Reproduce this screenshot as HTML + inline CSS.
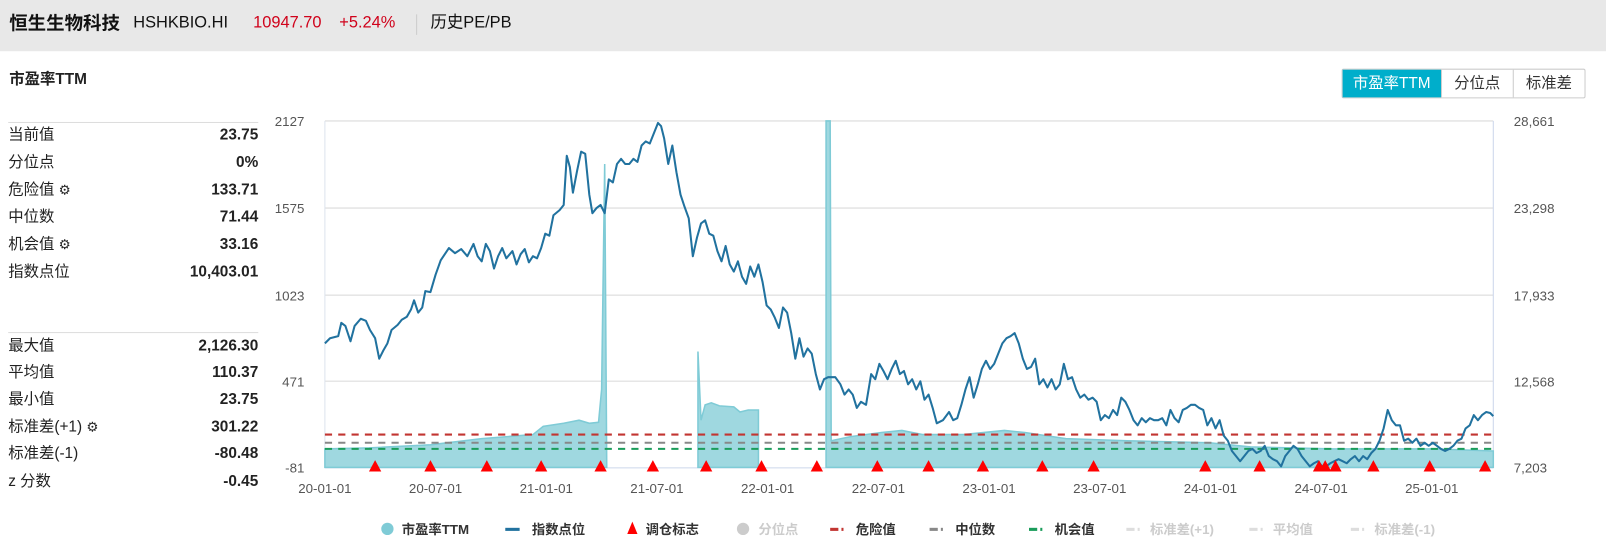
<!DOCTYPE html>
<html><head><meta charset="utf-8">
<style>
html,body{margin:0;padding:0;width:1606px;height:553px;overflow:hidden;background:#fff;font-family:"Liberation Sans","Noto Sans CJK SC",sans-serif;}
#w{position:absolute;left:0;top:0;width:1567px;height:540px;transform:scale(1.0249);transform-origin:0 0;}
.hdr{position:absolute;left:0;top:0;width:1567px;height:50px;background:#e8e8e8;}
.t{position:absolute;white-space:nowrap;line-height:20px;}
.row{position:absolute;left:8px;width:244px;font-size:15px;color:#222;display:flex;justify-content:space-between;align-items:center;height:20px;line-height:20px;}
.row b{font-weight:bold;font-family:"Liberation Sans",sans-serif;}
.btns{position:absolute;left:1309px;top:67px;height:27px;display:flex;border:1px solid #ccc;border-radius:2px;font-size:15px;}
.btns div{padding:0 12px;line-height:27px;border-left:1px solid #ccc;color:#333;}
.btns div.on{background:#00aecb;color:#fff;border-left:none;padding:0 10px;}
</style></head><body><div id="w">
<div class="hdr"></div>
<div class="t" style="left:9px;top:13px;font-size:18px;font-weight:bold;color:#111">恒生生物科技</div>
<div class="t" style="left:130px;top:13px;font-size:16px;color:#111">HSHKBIO.HI</div>
<div class="t" style="left:247px;top:13px;font-size:16px;color:#d0021b">10947.70</div>
<div class="t" style="left:331px;top:13px;font-size:16px;color:#d0021b">+5.24%</div>
<div style="position:absolute;left:406px;top:14px;width:1px;height:20px;background:#ccc"></div>
<div class="t" style="left:420px;top:13px;font-size:16px;color:#111">历史PE/PB</div>
<div class="t" style="left:9px;top:68px;font-size:15px;font-weight:bold;color:#222">市盈率TTM</div>
<div class="btns"><div class="on">市盈率TTM</div><div>分位点</div><div>标准差</div></div>

<div style="position:absolute;left:8px;top:119px;width:244px;height:1px;background:#ddd"></div>
<div style="position:absolute;left:8px;top:324px;width:244px;height:1px;background:#ddd"></div>
<div class="row" style="top:122px"><span>当前值</span><b>23.75</b></div>
<div class="row" style="top:149px"><span>分位点</span><b>0%</b></div>
<div class="row" style="top:176px"><span>危险值 <span style="font-size:13px">⚙</span></span><b>133.71</b></div>
<div class="row" style="top:202px"><span>中位数</span><b>71.44</b></div>
<div class="row" style="top:229px"><span>机会值 <span style="font-size:13px">⚙</span></span><b>33.16</b></div>
<div class="row" style="top:256px"><span>指数点位</span><b>10,403.01</b></div>
<div class="row" style="top:328px"><span>最大值</span><b>2,126.30</b></div>
<div class="row" style="top:354px"><span>平均值</span><b>110.37</b></div>
<div class="row" style="top:380px"><span>最小值</span><b>23.75</b></div>
<div class="row" style="top:407px"><span>标准差(+1) <span style="font-size:13px">⚙</span></span><b>301.22</b></div>
<div class="row" style="top:433px"><span>标准差(-1)</span><b>-80.48</b></div>
<div class="row" style="top:460px"><span>z 分数</span><b>-0.45</b></div>

<svg style="position:absolute;left:0;top:0" width="1567" height="540" font-family="Liberation Sans, sans-serif">
<g stroke="#e6e6e6" stroke-width="1.5">
<line x1="317" y1="118" x2="1457" y2="118"/><line x1="317" y1="203" x2="1457" y2="203"/>
<line x1="317" y1="288" x2="1457" y2="288"/><line x1="317" y1="372" x2="1457" y2="372"/>
</g>
<line x1="317" y1="118" x2="317" y2="456" stroke="#dde4ee"/>
<line x1="1457" y1="118" x2="1457" y2="456" stroke="#ccd6eb"/>
<line x1="317" y1="456.5" x2="1457" y2="456.5" stroke="#ccd6eb"/>
<g fill="#555" font-size="13" text-anchor="end">
<text x="297" y="123">2127</text><text x="297" y="208">1575</text><text x="297" y="293">1023</text><text x="297" y="377">471</text><text x="297" y="461">-81</text>
</g>
<g fill="#555" font-size="13">
<text x="1477" y="123">28,661</text><text x="1477" y="208">23,298</text><text x="1477" y="293">17,933</text><text x="1477" y="377">12,568</text><text x="1477" y="461">7,203</text>
</g>
<g fill="#555" font-size="13" text-anchor="middle">
<text x="317" y="481">20-01-01</text><text x="425" y="481">20-07-01</text><text x="533" y="481">21-01-01</text><text x="641" y="481">21-07-01</text><text x="749" y="481">22-01-01</text><text x="857" y="481">22-07-01</text><text x="965" y="481">23-01-01</text><text x="1073" y="481">23-07-01</text><text x="1181" y="481">24-01-01</text><text x="1289" y="481">24-07-01</text><text x="1397" y="481">25-01-01</text>
</g>
<g fill="#9fd8e0" stroke="#7fcbd6" stroke-width="1.5">
<polygon points="317,456 317,438 360,437 420,434 470,428 520,424 530,416 550,413 565,410 575,413 584,412 587,380 590,160 592,456"/>
<polygon points="681,456 681,343 684,410 688,395 694,393 702,396 716,397 722,402 730,400 740,400 740,456"/>
<polygon points="806,456 806,118 810,118 811,430 830,426 860,422 880,420 900,424 940,424 980,420 1000,422 1040,428 1100,430 1180,432 1220,436 1300,438 1400,438 1457,440 1457,456"/>
</g>
<g stroke-width="2" stroke-dasharray="7,6">
<line x1="317" y1="424" x2="1457" y2="424" stroke="#c23531"/>
<line x1="317" y1="432" x2="1457" y2="432" stroke="#888"/>
<line x1="317" y1="438" x2="1457" y2="438" stroke="#1a9c5a"/>
</g>
<polyline fill="none" stroke="#21729f" stroke-width="2" stroke-linejoin="round" points="317,335 322,330 330,328 333,315 337,318 342,333 346,318 352,311 357,313 361,322 366,330 370,350 374,342 378,335 382,322 388,317 392,312 397,309 401,302 404,293 408,305 412,300 415,284 420,285 425,268 430,254 438,242 444,247 450,243 456,250 462,238 466,250 470,255 474,238 478,245 482,262 486,250 490,242 494,252 500,245 504,258 508,248 512,243 516,256 520,250 524,252 528,242 532,228 536,230 540,210 546,205 550,200 553,152 556,163 559,188 563,167 567,148 571,150 575,190 578,208 582,203 586,200 590,208 594,175 598,178 602,160 606,155 610,160 614,160 618,155 622,158 626,142 630,138 634,140 638,130 642,120 645,123 648,135 652,160 656,142 660,168 664,190 668,202 672,213 676,250 680,232 684,218 688,215 692,228 696,230 700,245 704,255 708,240 712,258 716,265 720,255 724,270 728,277 732,260 736,270 740,258 744,275 748,298 752,302 756,310 760,320 764,300 768,305 772,325 776,350 780,330 784,348 788,340 792,345 796,365 800,380 804,370 808,368 815,368 820,375 824,385 828,380 832,385 836,398 840,392 845,395 850,365 854,370 858,355 862,362 866,370 870,360 874,352 878,365 882,362 886,375 890,370 894,380 898,372 902,390 906,385 910,398 914,413 920,410 926,402 930,410 934,408 938,395 942,380 946,368 950,388 954,375 958,360 962,352 966,360 970,355 974,345 978,335 982,330 986,328 990,325 994,335 998,350 1002,360 1006,358 1010,350 1014,375 1018,370 1022,378 1026,370 1030,380 1034,375 1038,355 1042,370 1046,368 1050,380 1054,388 1058,385 1062,390 1066,388 1070,392 1074,410 1078,405 1082,408 1086,400 1090,405 1094,388 1098,392 1102,400 1106,410 1110,415 1114,408 1118,412 1122,408 1126,410 1130,410 1134,408 1138,415 1142,400 1146,408 1150,412 1154,400 1158,398 1162,395 1166,395 1170,398 1174,400 1178,415 1182,408 1186,418 1190,410 1194,425 1198,430 1202,440 1206,445 1210,450 1214,445 1218,440 1222,438 1226,442 1230,440 1234,435 1238,445 1242,448 1246,450 1250,455 1254,445 1258,440 1262,435 1266,438 1270,445 1274,450 1278,455 1282,452 1286,450 1290,455 1294,455 1298,452 1302,450 1306,448 1310,450 1314,452 1318,448 1322,445 1326,450 1330,445 1334,448 1338,442 1342,438 1346,430 1350,418 1354,400 1358,410 1362,415 1366,415 1370,430 1374,428 1378,432 1382,428 1386,435 1390,432 1394,435 1398,432 1402,435 1406,438 1410,440 1414,438 1418,435 1422,430 1426,428 1430,418 1434,415 1438,405 1442,410 1446,405 1450,402 1454,403 1457,406"/>
<g fill="#f00">
<path d="M366,449l-6,11h12z"/><path d="M420,449l-6,11h12z"/><path d="M475,449l-6,11h12z"/><path d="M528,449l-6,11h12z"/><path d="M586,449l-6,11h12z"/><path d="M637,449l-6,11h12z"/><path d="M689,449l-6,11h12z"/><path d="M743,449l-6,11h12z"/><path d="M797,449l-6,11h12z"/><path d="M856,449l-6,11h12z"/><path d="M906,449l-6,11h12z"/><path d="M959,449l-6,11h12z"/><path d="M1017,449l-6,11h12z"/><path d="M1067,449l-6,11h12z"/><path d="M1176,449l-6,11h12z"/><path d="M1229,449l-6,11h12z"/><path d="M1287,449l-6,11h12z"/><path d="M1293,449l-6,11h12z"/><path d="M1303,449l-6,11h12z"/><path d="M1340,449l-6,11h12z"/><path d="M1395,449l-6,11h12z"/><path d="M1449,449l-6,11h12z"/>
</g>
<g font-size="13" font-weight="bold" font-family="Liberation Sans, Noto Sans CJK SC, sans-serif">
<circle cx="378" cy="516" r="6" fill="#7fcbd6"/><text x="392" y="521" fill="#333">市盈率TTM</text>
<rect x="493" y="515" width="14" height="3" fill="#21729f"/><text x="519" y="521" fill="#333">指数点位</text>
<path d="M617,509l-5,12h10z" fill="#f00"/><text x="630" y="521" fill="#333">调仓标志</text>
<circle cx="725" cy="516" r="6" fill="#ccc"/><text x="740" y="521" fill="#ccc">分位点</text>
<rect x="810" y="515" width="8" height="3" fill="#c23531"/><rect x="821" y="515" width="2" height="3" fill="#c23531"/><text x="835" y="521" fill="#333">危险值</text>
<rect x="907" y="515" width="8" height="3" fill="#888"/><rect x="918" y="515" width="2" height="3" fill="#888"/><text x="932" y="521" fill="#333">中位数</text>
<rect x="1004" y="515" width="8" height="3" fill="#1a9c5a"/><rect x="1015" y="515" width="2" height="3" fill="#1a9c5a"/><text x="1029" y="521" fill="#333">机会值</text>
<rect x="1099" y="515" width="8" height="3" fill="#ddd"/><rect x="1110" y="515" width="2" height="3" fill="#ddd"/><text x="1122" y="521" fill="#ccc">标准差(+1)</text>
<rect x="1219" y="515" width="8" height="3" fill="#ddd"/><rect x="1230" y="515" width="2" height="3" fill="#ddd"/><text x="1242" y="521" fill="#ccc">平均值</text>
<rect x="1318" y="515" width="8" height="3" fill="#ddd"/><rect x="1329" y="515" width="2" height="3" fill="#ddd"/><text x="1341" y="521" fill="#ccc">标准差(-1)</text>
</g>
</svg>
</div></body></html>
